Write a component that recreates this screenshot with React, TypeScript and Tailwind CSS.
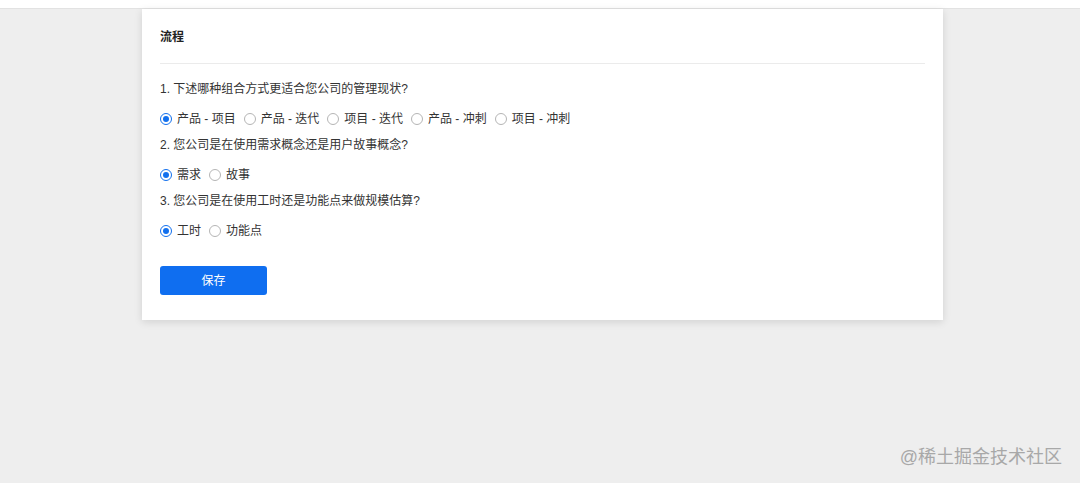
const questions = [
  {
    title: '1. 下述哪种组合方式更适合您公司的管理现状?',
    options: ['产品 - 项目', '产品 - 迭代', '项目 - 迭代', '产品 - 冲刺', '项目 - 冲刺'],
  },
  {
    title: '2. 您公司是在使用需求概念还是用户故事概念?',
    options: ['需求', '故事'],
  },
  {
    title: '3. 您公司是在使用工时还是功能点来做规模估算?',
    options: ['工时', '功能点'],
  },
];

function Radio({ label, checked }: { label: string; checked: boolean }) {
  return (
    <label className="mr-[8px] flex items-center gap-[5px]">
      <span
        className={`flex h-[12px] w-[12px] items-center justify-center rounded-full border bg-white ${
          checked ? 'border-[#1270ee]' : 'border-[#b5b5b5]'
        }`}
      >
        {checked && <span className="h-[6px] w-[6px] rounded-full bg-[#1270ee]" />}
      </span>
      <span>{label}</span>
    </label>
  );
}

export default function App() {
  return (
    <div
      className="relative flex min-h-[483px] flex-col bg-[#eeeeee] text-[12px] leading-[18px] text-[#333333]"
      style={{ fontFamily: '"Liberation Sans", "Noto Sans CJK SC", sans-serif' }}
    >
      <div className="h-[9px] border-b border-[#e2e2e2] bg-white" />

      <div className="ml-[142px] w-[801px] bg-white px-[18px] pb-[25px] pt-[19px] shadow-[0_2px_8px_rgba(0,0,0,0.12)]">
        <div className="border-b border-[#ebebeb] pb-[17px]">
          <h2 className="font-bold text-[#222]">流程</h2>
        </div>

        <div className="mt-[16px]">
          {questions.map((q, qi) => (
            <div key={qi} className={qi > 0 ? 'mt-[8px]' : ''}>
              <p>{q.title}</p>
              <div className="mt-[12px] flex">
                {q.options.map((opt, oi) => (
                  <Radio key={opt} label={opt} checked={oi === 0} />
                ))}
              </div>
            </div>
          ))}
        </div>

        <button className="mt-[26px] h-[29px] w-[107px] rounded-[3px] bg-[#0f6ef0] text-[12px] text-white">
          保存
        </button>
      </div>

      <div className="absolute bottom-[15px] right-[18px] text-[18px] leading-[22px] text-[#a8a8a8]">
        @稀土掘金技术社区
      </div>
    </div>
  );
}
